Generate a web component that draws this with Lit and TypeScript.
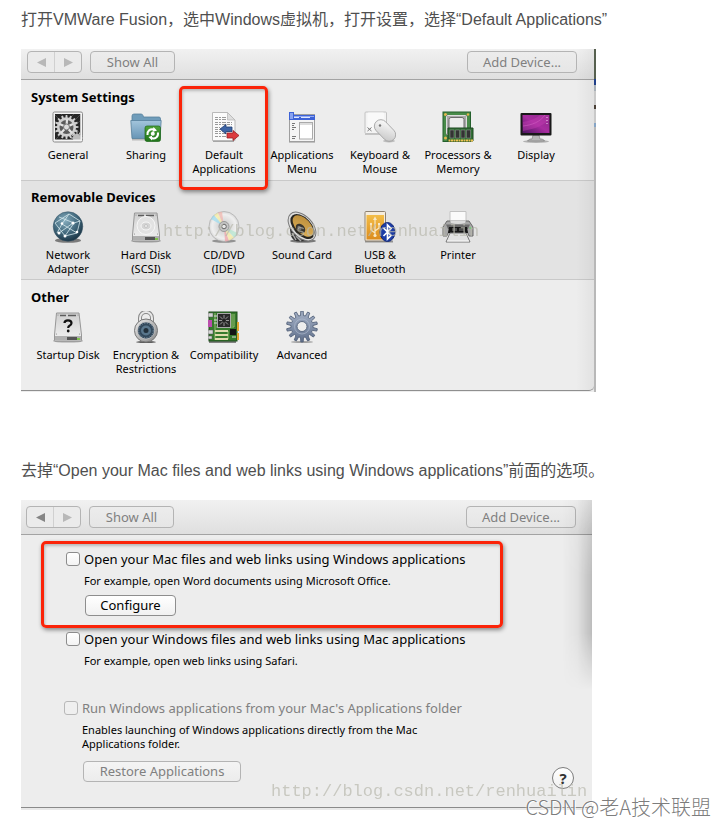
import { LitElement, html, css, svg, TemplateResult } from "lit";
import { customElement, property } from "lit/decorators.js";
import { classMap } from "lit/directives/class-map.js";

/* Outline of a gear with square teeth, centred on (cx, cy). */
function gear(cx: number, cy: number, teeth: number, outer: number, inner: number): string {
  const step = (Math.PI * 2) / teeth;
  const at = (r: number, a: number) =>
    `${(cx + r * Math.cos(a)).toFixed(2)} ${(cy + r * Math.sin(a)).toFixed(2)}`;
  let d = "";
  for (let i = 0; i < teeth; i++) {
    const a = i * step - Math.PI / 2;
    d += `${i ? "L" : "M"}${at(inner, a - step * 0.3)}L${at(outer, a - step * 0.17)}`;
    d += `L${at(outer, a + step * 0.17)}L${at(inner, a + step * 0.3)}`;
  }
  return d + "Z";
}

const lines = (x1: number, x2: number, ys: number[], color: string) =>
  ys.map((y) => svg`<path d="M${x1} ${y}H${x2}" stroke=${color} stroke-width="1" stroke-dasharray="3 1 2 1 4 1"/>`);

const drive = (id: string) => svg`
  <defs><linearGradient id=${id} x1="0" y1="0" x2="0" y2="1">
    <stop offset="0" stop-color="#cfcfcf"/><stop offset="1" stop-color="#f2f2f2"/></linearGradient></defs>
  <ellipse cx="16" cy="30" rx="15" ry="1.6" fill="#000" opacity=".3"/>
  <path d="M4.500 2H27L29.500 24V29.500Q29.500 30 29 30H3Q2.500 30 2.500 29.500V24Z" fill="url(#${id})" stroke="#979797"/>
  <path d="M3 25H29V29.500H3Z" fill="#b0b0b0"/>
  <path d="M15 26H25V29H15Z" fill="#555"/><path d="M25 27H28V29H25Z" fill="#7fc24c"/>
  <path d="M8 4.500H14M16 4.500H24" stroke="#5d5d5d" stroke-width="1.400"/>
  <g fill="#888"><circle cx="6" cy="4" r=".6"/><circle cx="26" cy="4" r=".6"/><circle cx="4.500" cy="23" r=".6"/><circle cx="27.500" cy="23" r=".6"/></g>`;

const icons: Record<string, TemplateResult> = {
  general: svg`
    <rect x="1" y="1" width="29.500" height="30" rx="1.500" fill="#f4f4f4" stroke="#8a8a8a"/>
    <rect x="3" y="3" width="25.500" height="26" fill="#262626"/>
    <path d="M3 4L28 29M9 3L28 22M3 10L22 29M28 4L3 29M22 3L3 22M28 10L9 29" stroke="#484848"/>
    <path d=${gear(14.5, 16, 16, 12, 9.5)} fill="#cfcfcf"/>
    <circle cx="14.500" cy="16" r="7" fill="#5b5b5b"/>
    <path d="M14.500 16L15 8.500M14.500 16L21 13M14.500 16L20 22M14.500 16L9 22M14.500 16L7.500 13" stroke="#e3e3e3" stroke-width="2.200"/>
    <circle cx="14.500" cy="16" r="3" fill="#ddd" stroke="#777"/>
    <path d=${gear(25, 27, 12, 6, 4)} fill="#bdbdbd"/><path d="M28.500 3H30V30H3V28.500H28.500Z" fill="#f4f4f4"/>`,
  sharing: svg`
    <defs><linearGradient id="fold" x1="0" y1="0" x2="0" y2="1"><stop offset="0" stop-color="#a3c5dc"/><stop offset="1" stop-color="#6795b6"/></linearGradient>
    <linearGradient id="grn" x1="0" y1="0" x2="0" y2="1"><stop offset="0" stop-color="#4fa33a"/><stop offset="1" stop-color="#1f741b"/></linearGradient></defs>
    <path d="M2 28.500H30" stroke="#888" stroke-width="2" opacity=".5"/>
    <path d="M2 5Q2 3 4 3H11Q12.500 3 13 4.500L13.500 6H29Q30.500 6 30.500 8V12H2Z" fill="#6f9cba" stroke="#55809d" stroke-width=".8"/>
    <path d="M.8 9.500H31.200L30 27.500H2Z" fill="url(#fold)" stroke="#567f9b" stroke-width=".8"/>
    <rect x="15" y="15" width="15.500" height="15.500" rx="2" fill="url(#grn)" stroke="#1c6518" stroke-width=".7"/>
    <circle cx="22.800" cy="22.800" r="2" fill="#fff"/>
    <path d="M17.500 24C17 20 20 17.500 24 18.500M28 21.500C28.500 26 25 28.500 21.500 27" fill="none" stroke="#fff" stroke-width="2"/>
    <path d="M23.500 16L27 19.500L22.500 21Z M22 24.800L18.500 26L22 29.500Z" fill="#fff"/>`,
  defaults: svg`
    <path d="M5 30H26" stroke="#777" stroke-width="2" opacity=".6"/>
    <path d="M4.500 1.500H19.500L27 9V29.500H4.500Z" fill="#fbfbfb" stroke="#b9b9b9"/>
    <path d="M19.500 1.500V9H27Z" fill="#dedede" stroke="#b5b5b5" stroke-width=".7"/>
    ${lines(7, 18, [6.5, 8.5], "#9a9a9a")}${lines(7, 24, [11.5, 13.5, 20.5, 22.5, 25.5], "#9a9a9a")}${lines(7, 12, [16.5, 18.5], "#9a9a9a")}
    <path d="M12 18L18 13.500V16H24V20.500H18V23Z" fill="#3d64a5" stroke="#213f75" stroke-width=".8"/>
    <path d="M31 24.500L25 19.500V22H19V27H25V29.500Z" fill="#dc3b3e" stroke="#951f25" stroke-width=".8"/>`,
  menu: svg`
    <path d="M3 31H29" stroke="#888" stroke-width="1.500" opacity=".6"/>
    <rect x="3.500" y="3.500" width="25" height="27" fill="#f4f4f4" stroke="#9e9e9e"/>
    <path d="M3 1H8V4H29V9H3Z" fill="#3d62d6"/><path d="M4 2H7V8H4Z" fill="#8aa3f0"/>
    <path d="M8 5H28V6H8Z" fill="#93abf4"/><path d="M8 6.500H13M15 6.500H24" stroke="#dfe7ff" stroke-width="1.200"/>
    <rect x="13.500" y="11.500" width="13" height="16.500" fill="#fff" stroke="#aaa"/><path d="M14 13H26" stroke="#bbb"/>
    <path d="M6 12.500H9M6 14.500H8M6 16.500H10M6 18.500H8M6 25.500H10M6 27.500H9" stroke="#777"/>`,
  keyboard: svg`
    <defs><linearGradient id="mouse" x1="0" y1="0" x2="1" y2="1"><stop offset="0" stop-color="#fff"/><stop offset="1" stop-color="#c4c4c4"/></linearGradient></defs>
    <path d="M1 23H22" stroke="#aaa" stroke-width="2" opacity=".6"/>
    <rect x="1" y="1" width="21.500" height="21.500" rx="1" fill="#f3f3f3" stroke="#c2c2c2"/>
    <rect x="3.500" y="1.500" width="16.500" height="17" rx="1" fill="#f9f9f9"/>
    <path d="M3.500 16.500L7.500 20M7.500 16.500L3.500 20" stroke="#777"/>
    <ellipse cx="25" cy="30" rx="6" ry="1.500" fill="#777" opacity=".4"/>
    <rect x="8.500" y="13" width="25" height="13" rx="6.500" transform="rotate(46 21 19.500)" fill="url(#mouse)" stroke="#9f9f9f" stroke-width=".8"/>
    <circle cx="16" cy="14.500" r="1.200" fill="#777"/>`,
  processors: svg`
    <rect x="1" y="1" width="27.500" height="29.500" fill="#488b49" stroke="#24602d"/>
    <g fill="#e1b74c"><circle cx="3.500" cy="3.500" r="1.500"/><circle cx="26" cy="3.500" r="1.200"/><circle cx="3.500" cy="27" r="1.500"/></g>
    <rect x="4" y="4" width="21" height="20" fill="#555"/><rect x="4.500" y="4.500" width="20" height="19" rx="1" fill="#a8a8a8" stroke="#ddd"/>
    <rect x="7" y="6.500" width="15" height="13" rx="2" fill="#ececec" stroke="#6a6a6a"/>
    <path d="M6 17H31V30H6Z" fill="#327036" stroke="#1c4820"/>
    <path d="M8 19H12V27H8ZM13.500 19H17.500V27H13.500ZM19 19H23V27H19ZM24.500 19H28.500V27H24.500Z" fill="#333" stroke="#999" stroke-width=".5"/>
    <path d="M6.500 29.500H31" stroke="#edc252" stroke-width="2" stroke-dasharray="2 .5"/>`,
  display: svg`
    <defs><linearGradient id="scr" x1="0" y1="1" x2="1" y2="0"><stop offset="0" stop-color="#4a1560"/><stop offset=".5" stop-color="#a82ca0"/><stop offset="1" stop-color="#8a2a88"/></linearGradient></defs>
    <ellipse cx="16" cy="30.500" rx="13" ry="1.500" fill="#777" opacity=".5"/>
    <path d="M13 24H19L20 28H22Q24.500 29 24.500 30H7.500Q8 29 10 28H12Z" fill="#b7b7b7" stroke="#777" stroke-width=".6"/>
    <rect x=".5" y="2" width="31" height="22.500" rx="1" fill="#191919"/>
    <rect x="2.500" y="4" width="27" height="18" fill="url(#scr)"/>
    <path d="M3 20C12 18 20 17 29 9V4H20C14 9 8 10 3 11Z" fill="#c53fb4" opacity=".45"/>
    <path d="M3 15C12 14 20 11 25 4" fill="none" stroke="#d866c8" stroke-width="1" opacity=".5"/>
    <path d="M27 6V13" stroke="#eed5ee" stroke-dasharray="1 2"/>`,
  network: svg`
    <defs><radialGradient id="globe" cx=".4" cy=".3" r=".75"><stop offset="0" stop-color="#86adbe"/><stop offset=".55" stop-color="#42697d"/><stop offset="1" stop-color="#162f3f"/></radialGradient></defs>
    <ellipse cx="16" cy="29.500" rx="13" ry="2.300" fill="#333" opacity=".6"/>
    <circle cx="16" cy="15.500" r="14.800" fill="url(#globe)" stroke="#385566" stroke-width=".5"/>
    <path d="M3 12L17 3L28 10L25 22L13 25L3 12M22 12L13 25M17 3L10 13L5 22M22 12L28 10M7 6L22 12M10 13L25 22M7 22L21 12" fill="none" stroke="#d6e8ee" stroke-width=".8"/>
    <g fill="#fff"><circle cx="21" cy="12" r="1.600"/><circle cx="10" cy="12.500" r="1.300"/><circle cx="13" cy="25" r="1.500"/><circle cx="25" cy="21" r="1.300"/><circle cx="7" cy="22" r="1.500"/></g>`,
  disk: svg`${drive("hd1")}
    <circle cx="16" cy="14.500" r="9" fill="#e2e2e2" stroke="#f7f7f7"/><ellipse cx="16" cy="15" rx="5" ry="4" fill="#d4d4d4" stroke="#f7f7f7"/><circle cx="16" cy="15" r="1.500" fill="#eee" stroke="#aaa" stroke-width=".5"/>`,
  cd: svg`
    <defs><radialGradient id="disc"><stop offset="0" stop-color="#c4c4c4"/><stop offset=".8" stop-color="#efefef"/><stop offset="1" stop-color="#d7d7d7"/></radialGradient></defs>
    <ellipse cx="16" cy="30" rx="12" ry="1.800" fill="#444" opacity=".5"/>
    <circle cx="16" cy="15.500" r="15" fill="url(#disc)" stroke="#aaa" stroke-width=".7"/>
    <g opacity=".7"><path d="M16 15.500L3 8A15 15 0 0 1 6 4Z" fill="#9bdcf0"/><path d="M16 15.500L6 4A15 15 0 0 1 10 1.700Z" fill="#f8efa0"/><path d="M16 15.500L10 1.700A15 15 0 0 1 14 .7Z" fill="#f2b5ac"/>
    <path d="M16 15.500L17 30.500A15 15 0 0 0 21 29.500Z" fill="#f2a0a5"/><path d="M16 15.500L21 29.500A15 15 0 0 0 26 26.500Z" fill="#f8eca0"/><path d="M16 15.500L26 26.500A15 15 0 0 0 29.500 22Z" fill="#b4e7cf"/></g>
    <circle cx="16" cy="15.500" r="5" fill="#c4c4c4" stroke="#999"/><circle cx="16" cy="15.500" r="2.300" fill="#e6e6e6" stroke="#666"/>`,
  sound: svg`
    <defs><linearGradient id="cone" x1="0" y1="0" x2="1" y2="1"><stop offset="0" stop-color="#b68938"/><stop offset="1" stop-color="#e1b45b"/></linearGradient></defs>
    <ellipse cx="17" cy="30" rx="13" ry="1.800" fill="#333" opacity=".6"/>
    <path d="M2 6L5 25Q7 31 15 30.500L25 30Z" fill="#333"/><path d="M6 22L10 29M10 25L15 30" stroke="#aaa" stroke-width="1.500"/>
    <ellipse cx="16" cy="15.500" rx="17" ry="10.500" transform="rotate(47 16 15.500)" fill="#ddd" stroke="#777"/>
    <ellipse cx="16.500" cy="15.500" rx="15" ry="8.800" transform="rotate(47 16.500 15.500)" fill="#292722"/>
    <ellipse cx="17" cy="15" rx="13" ry="7.300" transform="rotate(47 17 15)" fill="url(#cone)"/>
    <ellipse cx="14.500" cy="17.500" rx="5.500" ry="4" transform="rotate(47 14.500 17.500)" fill="#39362f"/><ellipse cx="13.500" cy="17" rx="2.500" ry="1.700" transform="rotate(47 13.500 17)" fill="#777"/>`,
  usb: svg`
    <defs><linearGradient id="amber" x1="0" y1="0" x2="0" y2="1"><stop offset="0" stop-color="#f3bd47"/><stop offset="1" stop-color="#dc8c1d"/></linearGradient></defs>
    <path d="M1 30.500H29" stroke="#444" stroke-width="2" opacity=".5"/>
    <rect x="1" y=".5" width="20.500" height="29.500" rx="1" fill="#f5ecdc" stroke="#8e8170"/>
    <rect x="2.500" y="4" width="17.500" height="24.500" fill="url(#amber)"/>
    <path d="M11 25V8M11 22L7 19V14M11 20L15 17V14" fill="none" stroke="#f8e8c5" stroke-width="1.200"/>
    <path d="M9 9L11 5.500L13 9Z" fill="#f8e8c5"/><circle cx="11" cy="24.500" r="1.600" fill="#f8e8c5"/><circle cx="7" cy="13" r="1.200" fill="#f8e8c5"/><path d="M14 12H16V14H14Z" fill="#f8e8c5"/>
    <ellipse cx="23.500" cy="21" rx="7.500" ry="9.500" fill="#1d3da6" stroke="#122775"/>
    <path d="M19.500 17L27 24.500L23.500 28V14L27 17.500L19.500 25" fill="none" stroke="#fff" stroke-width="1.700"/>`,
  printer: svg`
    <path d="M8 .5H24V12H8Z" fill="#fafafa" stroke="#c2c2c2"/>
    <path d="M5 10H27L31 16V25H27L25 20H7L5 25H1V16Z" fill="#a7a7a7" stroke="#686868"/>
    <path d="M8 9.500H24L23 12Q16 14 9 12Z" fill="#dcdcdc"/><path d="M4 13.500H28L26 18H6Z" fill="#6a6a6a"/>
    <path d="M7 16H25L26 22H6Z" fill="#161616"/><path d="M10 17H15V20H10ZM17 17H22V20H17Z" fill="#4c4c4c"/>
    <path d="M8 22H24L28 31H4Z" fill="#e2e2e2" stroke="#777"/><path d="M5 30H27" stroke="#f8f8f8"/><circle cx="28.500" cy="17" r="1" fill="#51d65c"/>`,
  startup: svg`${drive("hd2")}
    <path d="M12.500 12Q12.500 9.300 16 9.300Q19.500 9.300 19.500 12Q19.500 13.800 17.500 14.800Q16.200 15.500 16.200 17" fill="none" stroke="#111" stroke-width="2.200"/><circle cx="16.200" cy="20" r="1.400" fill="#111"/>`,
  encryption: svg`
    <defs><linearGradient id="lock" x1="0" y1="0" x2="1" y2="1"><stop offset="0" stop-color="#eee"/><stop offset="1" stop-color="#868686"/></linearGradient></defs>
    <ellipse cx="16" cy="31" rx="10" ry="1.200" fill="#222" opacity=".7"/>
    <path d="M10 14V7A6 6 0 0 1 22 7V14" fill="none" stroke="#888" stroke-width="4"/><path d="M10 14V7A6 6 0 0 1 22 7V14" fill="none" stroke="#e9e9e9" stroke-width="2"/>
    <circle cx="16" cy="19.500" r="11.500" fill="url(#lock)" stroke="#777"/><circle cx="16" cy="19.500" r="8.500" fill="#33495c" stroke="#ccc" stroke-width=".7"/>
    <circle cx="16" cy="19.500" r="7.300" fill="none" stroke="#8397a7" stroke-dasharray="1 1.500"/><circle cx="16" cy="19.500" r="5" fill="#59768c"/><circle cx="16" cy="19.500" r="2.500" fill="#22303b"/>`,
  compatibility: svg`
    <path d="M1 31H28" stroke="#222" stroke-width="1.500" opacity=".7"/><rect x="1" y="1" width="28" height="29" fill="#367b2c" stroke="#1c4d1a"/>
    <path d="M7 2V29M8 16H26M20 20V28M26 3V16M24 3V15" stroke="#93bd71"/>
    <rect x="9" y="2" width="14" height="15" fill="#aaa"/><rect x="10" y="3" width="12" height="13" fill="#292929"/>
    <path d="M16 4V15M11 9.500H21M12 5.500L20 13.500M20 5.500L12 13.500" stroke="#999"/><circle cx="16" cy="9.500" r="2" fill="#222"/>
    <path d="M7 20H20M7 24H20M7 28H20" stroke="#dedbac" stroke-width="2"/>
    <rect x="22" y="18" width="6" height="6" fill="#151515"/><path d="M29 11H31V20H29ZM29 22H31V29H29Z" fill="#e2a633"/>
    <path d="M0 2H5V6H0ZM0 19H5V23H0ZM0 25H4V28H0Z" fill="#d5d5d5" stroke="#555" stroke-width=".5"/><path d="M0 9H4V16H0Z" fill="#ba4eac"/>
    <path d="M6 5H9M6 9H9M6 12H9M24 26H28" stroke="#ddd"/>`,
  advanced: svg`
    <defs><linearGradient id="steel" x1="0" y1="0" x2="0" y2="1"><stop offset="0" stop-color="#a6b2c7"/><stop offset="1" stop-color="#60708c"/></linearGradient></defs>
    <ellipse cx="16" cy="31" rx="11" ry="1" fill="#555" opacity=".5"/>
    <path d="${gear(16, 15.5, 14, 15.5, 11)}M21 15.500A5 5 0 1 0 11 15.500A5 5 0 1 0 21 15.500Z" fill="url(#steel)" fill-rule="evenodd" stroke="#53627b" stroke-width=".9"/>
    <circle cx="16" cy="15.500" r="7.500" fill="none" stroke="#b5c1d4" opacity=".6"/>`,
};

interface Item { icon: string; label: string; marked?: boolean }
interface Group { title: string; items: Item[] }

const groups: Group[] = [
  { title: "System Settings", items: [
    { icon: "general", label: "General" },
    { icon: "sharing", label: "Sharing" },
    { icon: "defaults", label: "Default\nApplications", marked: true },
    { icon: "menu", label: "Applications\nMenu" },
    { icon: "keyboard", label: "Keyboard &\nMouse" },
    { icon: "processors", label: "Processors &\nMemory" },
    { icon: "display", label: "Display" },
  ] },
  { title: "Removable Devices", items: [
    { icon: "network", label: "Network\nAdapter" },
    { icon: "disk", label: "Hard Disk\n(SCSI)" },
    { icon: "cd", label: "CD/DVD\n(IDE)" },
    { icon: "sound", label: "Sound Card" },
    { icon: "usb", label: "USB &\nBluetooth" },
    { icon: "printer", label: "Printer" },
  ] },
  { title: "Other", items: [
    { icon: "startup", label: "Startup Disk" },
    { icon: "encryption", label: "Encryption &\nRestrictions" },
    { icon: "compatibility", label: "Compatibility" },
    { icon: "advanced", label: "Advanced" },
  ] },
];

const controls = css`
  *, *::before, *::after { box-sizing: border-box; }
  button { font: inherit; color: inherit; margin: 0; padding: 0; border: 0; background: none; }
  .btn {
    height: 22px; line-height: 20px; font-size: 13px; color: #000; white-space: nowrap;
    border: 1px solid #8e8e8e; border-radius: 4px; background: linear-gradient(#fff, #f1f1f1);
  }
  .btn:disabled { color: #808080; border-color: #b4b4b4; background: linear-gradient(#f4f4f4, #ececec); }
  .stamp { position: absolute; font: 17px/16px "Liberation Mono", monospace; color: #b9b9ae; opacity: .7; pointer-events: none; }
`;

@customElement("window-toolbar")
export class WindowToolbar extends LitElement {
  @property({ type: Boolean }) canGoBack = false;

  static styles = [controls, css`
    :host { display: flex; align-items: flex-start; border-bottom: 1px solid #a3a3a3; background: linear-gradient(#f1f1f1, #dfdfdf); }
    .nav { display: flex; width: 55px; height: 22px; margin-right: 8px; border: 1px solid #b4b4b4; border-radius: 4px; background: #ebebeb; }
    .step { flex: 1; display: grid; place-items: center; color: #b8b8b8; }
    .step + .step { border-left: 1px solid #d0d0d0; }
    .ready { color: #858585; }
    .show { width: 85px; }
    .add { width: 110px; margin-left: auto; }
    .show.btn:disabled, .add.btn:disabled { background: linear-gradient(#ececec, #e6e6e6); }
  `];

  render() {
    return html`
      <div class="nav">
        <button class=${classMap({ step: true, ready: this.canGoBack })} aria-label="Back" ?disabled=${!this.canGoBack}>
          <svg width="9" height="9" viewBox="0 0 9 9"><path d="M9 0V9L0 4.500Z" fill="currentColor"/></svg>
        </button>
        <button class="step" aria-label="Forward" disabled>
          <svg width="9" height="9" viewBox="0 0 9 9"><path d="M0 0V9L9 4.500Z" fill="currentColor"/></svg>
        </button>
      </div>
      <button class="btn show" disabled>Show All</button>
      <button class="btn add" disabled>Add Device...</button>`;
  }
}

@customElement("settings-window")
export class SettingsWindow extends LitElement {
  static styles = [controls, css`
    :host {
      display: flex; position: relative; max-width: 575px; background: #ededed;
      font: 11px/14px "Noto Sans", sans-serif; color: #000;
    }
    .main { flex: 1; min-width: 0; border-bottom: 1px solid #8f8f8f; margin-bottom: 1px; border-radius: 0 0 5px 0; overflow: hidden; }
    .edge { width: 2px; background: linear-gradient(#56604f 0 30px, #21408a 30px 36px, #a8b0b8 36px 42px, #c9c9c9 42px 56px, #4a4036 56px 60px, #c9c9c9 60px 74px, #86a5c6 74px 78px, #b8b8b8 78px); }
    window-toolbar { padding: 2px 17px 5px 6px; height: 31px; }
    .group { height: 100px; padding: 8px 8px 0; }
    .group:nth-of-type(2) { padding-top: 7px; background: #e3e3e3; border: solid #c9c9c9; border-width: 1px 0; }
    .group:last-of-type { height: 110px; }
    .title { margin: 0 0 5px 2px; font-size: 13px; line-height: 18px; font-weight: 700; }
    .items { display: flex; }
    .item { position: relative; flex: 0 0 78px; display: flex; flex-direction: column; align-items: center; gap: 5px; min-height: 65px; }
    .label { white-space: pre; text-align: center; }
    .mark { position: absolute; z-index: 1; inset: -25px -5px -14px -6px; border: 3px solid #fb2409; border-radius: 5px; box-shadow: 1px 2px 4px #00000070, inset 1px 2px 3px #00000038; }
    .stamp { left: 142px; top: 175px; }
    .shade { position: absolute; inset: 0 2px 2px auto; width: 18px; background: linear-gradient(90deg, #0000, #0000000c); pointer-events: none; }
  `];

  render() {
    return html`
      <div class="main">
        <window-toolbar></window-toolbar>
        ${groups.map((g) => html`
          <section class="group">
            <h2 class="title">${g.title}</h2>
            <div class="items">
              ${g.items.map((i) => html`
                <button class="item">
                  <svg width="32" height="32" viewBox="0 0 32 32" aria-hidden="true">${icons[i.icon]}</svg>
                  <span class="label">${i.label}</span>
                  ${i.marked ? html`<span class="mark"></span>` : null}
                </button>`)}
            </div>
          </section>`)}
      </div>
      <div class="edge"></div>
      <div class="shade"></div>
      <div class="stamp">http://blog.csdn.net/renhuailin</div>`;
  }
}

@customElement("applications-window")
export class ApplicationsWindow extends LitElement {
  static styles = [controls, css`
    :host {
      display: block; position: relative; max-width: 571px; background: #ededed; border-bottom: 2px solid #e9e9e9;
      font: 11px/14px "Noto Sans", sans-serif; color: #000;
    }
    window-toolbar { padding: 6px 16px 6px 5px; height: 35px; }
    .body { padding: 6px 18px 18px 20px; border-bottom: 1px solid #8a8a8a; }
    .marked { max-width: 462px; padding: 7px 0 9px 22px; border: 3px solid #fb2409; border-radius: 5px; box-shadow: 1px 2px 4px #00000070, inset 1px 2px 3px #00000038; }
    .option { padding: 3px 0 32px 25px; }
    .limited { padding-left: 23px; }
    .check { display: flex; align-items: center; gap: 4px; font-size: 13px; line-height: 16px; white-space: nowrap; }
    .box { appearance: none; flex: none; width: 14px; height: 14px; margin: 0; border: 1px solid #8c8c8c; border-radius: 3px; background: linear-gradient(#fff, #f3f3f3); }
    .box:disabled { border-color: #b8b8b8; background: #efefef; }
    .off { color: #808080; }
    .note { margin: 7px 0 0 18px; white-space: pre-line; }
    .configure, .restore { height: 21px; line-height: 19px; }
    .configure { display: block; width: 91px; margin: 7px 0 0 19px; }
    .foot { display: flex; justify-content: space-between; align-items: flex-end; margin-top: 10px; padding-left: 42px; }
    .restore { width: 158px; margin-bottom: 7px; }
    .help { width: 22px; height: 22px; border: 1px solid #7d7d7d; border-radius: 50%; background: linear-gradient(#fff, #f1f1f1); font-size: 15px; line-height: 20px; font-weight: 700; color: #333; }
    .shade { position: absolute; top: 0; right: 0; width: 30px; height: 190px; pointer-events: none; background: linear-gradient(90deg, #0000 0, #0000000c 50%, #00000034 100%); mask-image: linear-gradient(#0008, #000 40%, #000 70%, #0000); }
    .stamp { left: 250px; bottom: 8px; }
  `];

  render() {
    return html`
      <window-toolbar .canGoBack=${true}></window-toolbar>
      <div class="body">
        <div class="marked">
          <label class="check"><input class="box" type="checkbox">Open your Mac files and web links using Windows applications</label>
          <p class="note">For example, open Word documents using Microsoft Office.</p>
          <button class="btn configure">Configure</button>
        </div>
        <div class="option">
          <label class="check"><input class="box" type="checkbox">Open your Windows files and web links using Mac applications</label>
          <p class="note">For example, open web links using Safari.</p>
        </div>
        <div class="limited">
          <label class="check off"><input class="box" type="checkbox" disabled>Run Windows applications from your Mac's Applications folder</label>
          <p class="note">${"Enables launching of Windows applications directly from the Mac\nApplications folder."}</p>
        </div>
        <div class="foot">
          <button class="btn restore" disabled>Restore Applications</button>
          <button class="help" aria-label="Help">?</button>
        </div>
      </div>
      <div class="shade"></div>
      <div class="stamp">http://blog.csdn.net/renhuailin</div>`;
  }
}

@customElement("app-root")
export class AppRoot extends LitElement {
  static styles = css`
    :host { display: block; position: relative; min-height: 826px; box-sizing: border-box; padding: 7px 21px 15px; background: #fff; font: 16px/26px "Liberation Sans", "Noto Sans CJK SC", sans-serif; color: #4f4f4f; }
    .step { margin: 0 0 16px; }
    .step + settings-window { margin-bottom: 66px; }
    .credit { position: absolute; right: 14px; bottom: 5px; font: 300 20px/28px "Noto Sans CJK SC", sans-serif; color: #666d; text-shadow: 0 0 2px #fff, 1px 1px 0 #fff; }
  `;

  render() {
    return html`
      <p class="step">打开VMWare Fusion，选中Windows虚拟机，打开设置，选择“Default Applications”</p>
      <settings-window></settings-window>
      <p class="step">去掉“Open your Mac files and web links using Windows applications”前面的选项。</p>
      <applications-window></applications-window>
      <div class="credit">CSDN @老A技术联盟</div>`;
  }
}
